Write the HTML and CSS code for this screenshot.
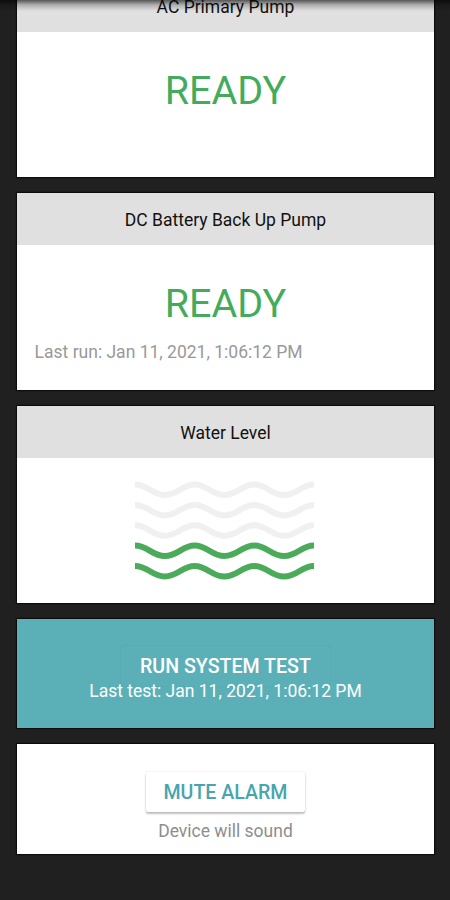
FILE: index.html
```html
<!DOCTYPE html>
<html lang="en">
<head>
    <meta charset="UTF-8">
    <meta name="viewport" content="width=device-width, initial-scale=1.0">
    <title>Sump Pump Monitor</title>
    <link rel="stylesheet" href="styles.css">
</head>
<body>
    <div class="top-shadow"></div>
    <main class="cards">
        <section class="card pump">
            <h2 class="card-title">AC Primary Pump</h2>
            <div class="status">READY</div>
        </section>

        <section class="card pump">
            <h2 class="card-title">DC Battery Back Up Pump</h2>
            <div class="status">READY</div>
            <p class="last-run">Last run: Jan 11, 2021, 1:06:12 PM</p>
        </section>

        <section class="card pump">
            <h2 class="card-title">Water Level</h2>
            <svg class="waves" width="179" height="100" viewBox="0 0 179 100">
                <defs>
                    <path id="wave" d="M0 3.5C13 3.5 17 14 29.8 14S47 3.5 59.7 3.5S76.5 14 89.5 14S106.5 3.5 119.3 3.5S136 14 149.2 14S166 3.5 179 3.5"/>
                </defs>
                <use href="#wave" class="wave"/>
                <use href="#wave" class="wave" y="20.4"/>
                <use href="#wave" class="wave" y="40.8"/>
                <use href="#wave" class="wave filled" y="61.1"/>
                <use href="#wave" class="wave filled" y="81.5"/>
            </svg>
        </section>

        <section class="card action test">
            <button class="btn btn-test">RUN SYSTEM TEST</button>
            <p class="note">Last test: Jan 11, 2021, 1:06:12 PM</p>
        </section>

        <section class="card action mute">
            <button class="btn btn-mute">MUTE ALARM</button>
            <p class="note">Device will sound</p>
        </section>
    </main>
</body>
</html>
```
FILE: styles.css
```css
* {
    box-sizing: border-box;
}

body {
    display: flow-root;
    margin: 0;
    height: 900px;
    overflow: hidden;
    background: #202020;
    font-family: Roboto, "Liberation Sans", sans-serif;
}

/* shadow of the toolbar over the scrolled list */
.top-shadow {
    position: absolute;
    top: 0;
    left: 0;
    right: 0;
    height: 11px;
    background: linear-gradient(rgba(0, 0, 0, 0.62), rgba(0, 0, 0, 0.22) 45%, rgba(0, 0, 0, 0));
    z-index: 1;
}

.cards {
    display: flex;
    flex-direction: column;
    gap: 16px;
    margin-top: -20.5px;
    padding: 0 15.7px 0 16.6px;
}

.card {
    flex: none;
    background: #fff;
    box-shadow: 0 0 1px 1px #0c0c0c;
}

.pump {
    height: 197px;
}

.card-title {
    display: flex;
    align-items: center;
    justify-content: center;
    height: 52.6px;
    margin: 0;
    padding-top: 1.5px;
    background: #e0e0e0;
    color: #111;
    font-size: 17.5px;
    font-weight: 400;
}

.status {
    padding-top: 35px;
    text-align: center;
    color: #45ab5c;
    font-size: 39.5px;
    line-height: 48px;
}

.last-run {
    margin: 13.5px 0 0 18px;
    color: #999;
    font-size: 17.5px;
    line-height: 20px;
}

.waves {
    display: block;
    margin: 23px auto 0 118.5px;
}

.wave {
    fill: none;
    stroke: #f0f0f0;
    stroke-width: 6;
}

.filled {
    stroke: #4cab5b;
}

.action {
    display: flex;
    flex-direction: column;
    align-items: center;
    height: 109.8px;
    padding-top: 27.5px;
}

.btn {
    height: 40px;
    padding: 1px 0 0;
    border: none;
    border-radius: 2px;
    font-family: inherit;
    font-size: 19.6px;
    font-weight: 500;
}

.btn-test {
    width: 209px;
    background: #5bb0b8;
    color: #fff;
    box-shadow: 0 0 1px rgba(0, 60, 70, 0.3);
}

.btn-mute {
    width: 159px;
    background: #fff;
    color: #48a5ae;
    box-shadow: 0 2px 2px rgba(0, 0, 0, 0.24), 0 0 2px rgba(0, 0, 0, 0.14);
}

.note {
    margin: 0;
    font-size: 17.5px;
    line-height: 20px;
}

.test {
    background: #5bb0b8;
}

.test .note {
    margin-top: -5px;
    color: #fff;
}

.mute .note {
    margin-top: 9px;
    color: #8e8e8e;
}
```
